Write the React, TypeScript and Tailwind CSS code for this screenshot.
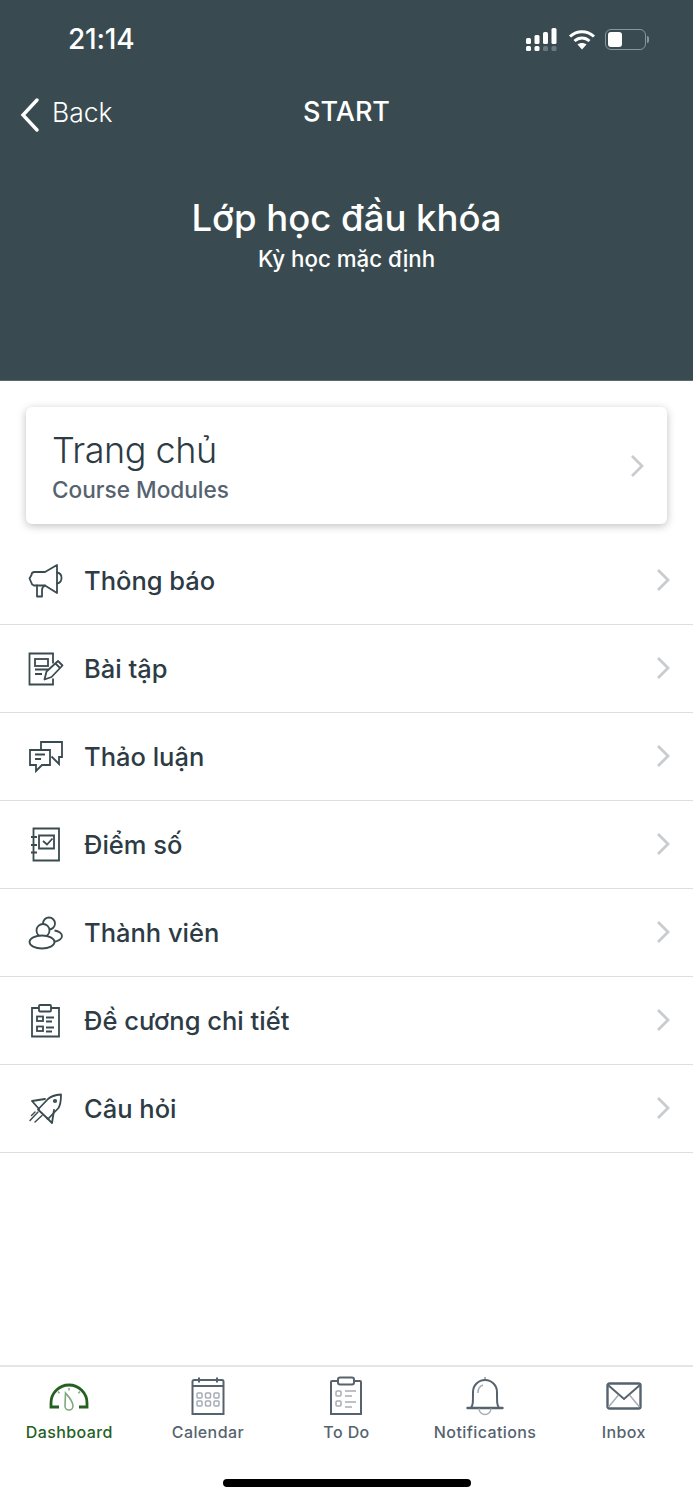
const ink = "#3a4b50";
const slate = "#56636f";

function Megaphone() {
  return (
    <svg width="36" height="36" viewBox="0 0 36 36" fill="none" stroke={ink} strokeWidth="1.8" strokeLinejoin="round" strokeLinecap="round">
      <path d="M6 9h11l12-7v28L17 22.500H6a3 3 0 0 1-2.500-2.500l-2-4.500 2-3.500A3 3 0 0 1 6 9z" />
      <path d="M29 9.500a5.500 5.500 0 0 1 4.500 5.500A5.500 5.500 0 0 1 29 20.500" />
      <path d="M9 22.500V33.500h5v-6.500a5 5 0 0 1 3-4.500" />
    </svg>
  );
}
function Assignment() {
  return (
    <svg width="36" height="36" viewBox="0 0 36 36" fill="none" stroke={ink} strokeWidth="1.8">
      <path d="M25 12.500V2.500H1.500v31H25v-6" />
      <rect x="7" y="8" width="13" height="7" />
      <path d="M7 18.500h13M7 23h7" />
      <path d="M16.500 28.500l2-8L30 10l4.500 4.500L23.500 26z" strokeLinejoin="round" />
      <path d="M27.500 12.500l4.500 4.500" />
    </svg>
  );
}
function Discussion() {
  return (
    <svg width="36" height="36" viewBox="0 0 36 36" fill="none" stroke={ink} strokeWidth="1.8">
      <path d="M2 11h20v15H14l-6 6v-6H2z" />
      <path d="M13 11V3h21v15h-3v7l-7.500-7.500" />
      <path d="M7 15.500h10M7 20h6" />
    </svg>
  );
}
function Grades() {
  return (
    <svg width="36" height="36" viewBox="0 0 36 36" fill="none" stroke={ink} strokeWidth="1.8">
      <path d="M5.500 1.500H31v32H5.500z" />
      <path d="M11 8.500h15v13H11z" />
      <path d="M15 14l4 3.500 5.500-6" />
      <path d="M3 10h6M3 18h6M3 25.500h6" />
    </svg>
  );
}
function People() {
  return (
    <svg width="36" height="36" viewBox="0 0 36 36" fill="none" stroke={ink} strokeWidth="1.8">
      <circle cx="21" cy="8.500" r="6" />
      <path d="M26.500 15.500c4.500.5 7.500 3 7.500 5.500 0 3-3.500 5-8.500 6" />
      <circle cx="15" cy="15.500" r="6.500" fill="#fff" />
      <ellipse cx="14" cy="27" rx="12.500" ry="6.500" fill="#fff" />
    </svg>
  );
}
function Syllabus() {
  return (
    <svg width="36" height="36" viewBox="0 0 36 36" fill="none" stroke={ink} strokeWidth="1.8">
      <path d="M11 5H4v28.500h27V5h-8" />
      <rect x="11" y="2" width="12" height="6.500" rx="1" />
      <rect x="9" y="13.500" width="6" height="4.500" />
      <rect x="9" y="23.500" width="6" height="4.500" />
      <path d="M18 14.500h8M18 18.500h6M18 24.500h8M18 28.500h6" />
    </svg>
  );
}
function Rocket() {
  return (
    <svg width="36" height="36" viewBox="0 0 36 36" fill="none" stroke={ink} strokeWidth="1.8" strokeLinejoin="round" strokeLinecap="round">
      <path d="M33 3.500c-6 .5-10 1.500-13 4.500L10 18.500 20 28l10.500-11c2-3 2.500-8 2.500-13.500z" />
      <path d="M17 8L4 10l7 8" />
      <path d="M26 19l-2 13-5-5" />
      <circle cx="27" cy="10" r="1.200" />
      <path d="M2 29.500L10 21M7 31l7-6.500M3.500 24.500L7 21" strokeWidth="1.400" />
    </svg>
  );
}
function Chevron() {
  return (
    <svg width="14" height="24" viewBox="0 0 14 24" fill="none" stroke="#c8ccd0" strokeWidth="2.800">
      <path d="M2 2l10 10-10 10" />
    </svg>
  );
}
function Dashboard() {
  return (
    <svg width="40" height="26" viewBox="0 0 40 26" fill="none" className="overflow-visible">
      <path d="M10 24H2v-4a18 18 0 0 1 36 0v4h-8" stroke="#24611f" strokeWidth="2.800" />
      <path d="M16.500 10c3.500 4 7.500 8 7.500 13a4 4 0 0 1-8 0z" stroke="#7fa87c" strokeWidth="1.600" />
      <path d="M20 5v2.500M9 8.500l1.500 1.800M31 8.500l-1.500 1.800" stroke="#7fa87c" strokeWidth="1.500" />
    </svg>
  );
}
function CalendarIcon() {
  return (
    <svg width="34" height="40" viewBox="0 0 34 40" fill="none" stroke={slate}>
      <path d="M1.500 5.500A1.500 1.500 0 0 1 3 4h28a1.500 1.500 0 0 1 1.500 1.500V38h-31z" strokeWidth="2" />
      <path d="M2 10h30" strokeWidth="2" />
      <path d="M8 1.500v5M26 1.500v5" strokeWidth="2" />
      <g stroke="#a7adb5" strokeWidth="1.500">
        <rect x="6" y="17" width="5" height="5" rx="1" />
        <rect x="14.500" y="17" width="5" height="5" rx="1" />
        <rect x="23" y="17" width="5" height="5" rx="1" />
        <rect x="6" y="25" width="5" height="5" rx="1" />
        <rect x="14.500" y="25" width="5" height="5" rx="1" />
        <rect x="23" y="25" width="5" height="5" rx="1" />
      </g>
    </svg>
  );
}
function TodoIcon() {
  return (
    <svg width="34" height="40" viewBox="0 0 34 40" fill="none" stroke={slate}>
      <path d="M9 5H3a1 1 0 0 0-1 1v32h30V6a1 1 0 0 0-1-1h-6" strokeWidth="2" />
      <rect x="9" y="1.500" width="16" height="7" rx="2" strokeWidth="2" />
      <g stroke="#a7adb5" strokeWidth="1.500">
        <rect x="7" y="15" width="5" height="5" rx="1" />
        <rect x="7" y="25" width="5" height="5" rx="1" />
        <path d="M16 15h11M16 20h7M16 26h11M16 31h7" />
      </g>
    </svg>
  );
}
function BellIcon() {
  return (
    <svg width="38" height="42" viewBox="0 0 38 42" fill="none" stroke={slate}>
      <path d="M1.500 33h35" strokeWidth="2.400" strokeLinecap="round" />
      <path d="M5 33c2-3 2-5 2-16a12 12 0 0 1 24 0c0 11 0 13 2 16" strokeWidth="2" />
      <path d="M19 2v3" strokeWidth="1" />
      <path d="M13 33.500a6 6 0 0 0 12 0" stroke="#a7adb5" strokeWidth="1.500" />
      <path d="M12 18c0-4 1.500-7 5-8" stroke="#a7adb5" strokeWidth="1.500" />
    </svg>
  );
}
function InboxIcon() {
  return (
    <svg width="36" height="28" viewBox="0 0 36 28" fill="none" stroke={slate}>
      <rect x="1.500" y="1.500" width="33" height="25" rx="2" strokeWidth="2.400" />
      <path d="M2 3l16 14L34 3" strokeWidth="2" />
      <path d="M2.500 25l10-12M33.500 25l-10-12" stroke="#a7adb5" strokeWidth="1.500" />
    </svg>
  );
}
function SignalIcon() {
  return (
    <svg width="34" height="24" viewBox="0 0 34 24" fill="#fff">
      <rect x="1" y="11" width="5" height="6" rx="1.500" />
      <rect x="1" y="19" width="5" height="5" rx="1.500" />
      <rect x="9.500" y="8" width="5" height="9" rx="1.500" />
      <rect x="9.500" y="19" width="5" height="5" rx="1.500" />
      <rect x="18" y="5" width="5" height="12" rx="1.500" />
      <rect x="18" y="19" width="5" height="5" rx="1.500" fill="#6a7a7e" />
      <rect x="26.500" y="1" width="5" height="16" rx="1.500" />
      <rect x="26.500" y="19" width="5" height="5" rx="1.500" fill="#6a7a7e" />
    </svg>
  );
}
function WifiIcon() {
  return (
    <svg width="28" height="22" viewBox="0 0 28 22" fill="none" stroke="#fff" strokeWidth="3">
      <path d="M2 8.500c7-6.500 17-6.500 24 0" />
      <path d="M6.500 13c4.500-4 10.500-4 15 0" />
      <path d="M14 21.500l-4.500-5c2.500-2 6.500-2 9 0z" fill="#fff" stroke="none" />
    </svg>
  );
}
function BatteryIcon() {
  return (
    <div className="flex items-center gap-[1px]">
      <div className="flex h-[21px] w-[41px] items-center rounded-[6px] border-[1.500px] border-[#8a9699] p-[2px]">
        <div className="h-full w-[14px] rounded-[3px] bg-white" />
      </div>
      <div className="h-[7px] w-[2px] rounded-r-full bg-[#8a9699]" />
    </div>
  );
}

const rows = [
  { label: "Thông báo", Icon: Megaphone },
  { label: "Bài tập", Icon: Assignment },
  { label: "Thảo luận", Icon: Discussion },
  { label: "Điểm số", Icon: Grades },
  { label: "Thành viên", Icon: People },
  { label: "Đề cương chi tiết", Icon: Syllabus },
  { label: "Câu hỏi", Icon: Rocket },
];

const tabs = [
  { label: "Dashboard", Icon: Dashboard, active: true },
  { label: "Calendar", Icon: CalendarIcon, active: false },
  { label: "To Do", Icon: TodoIcon, active: false },
  { label: "Notifications", Icon: BellIcon, active: false },
  { label: "Inbox", Icon: InboxIcon, active: false },
];

export default function App() {
  return (
    <div className="flex h-[1500px] w-[693px] flex-col overflow-hidden bg-white font-['Inter','Noto_Sans',sans-serif]">
      <header className="flex h-[381px] shrink-0 flex-col border-b border-[#5a6b70] bg-[#394b50] text-white">
        <div className="flex h-[78px] items-center justify-between pl-[68px] pr-[44px]">
          <span className="text-[28px] font-medium tracking-[-0.2px]">21:14</span>
          <div className="flex items-center gap-[9px]">
            <SignalIcon />
            <WifiIcon />
            <BatteryIcon />
          </div>
        </div>
        <div className="relative flex h-[68px] items-center justify-center">
          <div className="absolute left-[20px] top-[17px] flex items-center gap-[12px]">
            <svg width="20" height="34" viewBox="0 0 20 34" fill="none" stroke="#fff" strokeWidth="3.400" strokeLinecap="round">
              <path d="M17 2L3 17l14 15" />
            </svg>
            <span className="-translate-y-[2px] text-[26.500px] font-light">Back</span>
          </div>
          <span className="text-[27px] font-medium">START</span>
        </div>
        <div className="flex flex-col items-center pt-[44px]">
          <span className="text-[36.500px] font-medium leading-[56px]">Lớp học đầu khóa</span>
          <span className="text-[22.300px] font-medium leading-[26px]">Kỳ học mặc định</span>
        </div>
      </header>

      <main className="flex flex-1 flex-col">
        <div className="px-[26px] pt-[26px] pb-[13px]">
          <div className="flex h-[117px] items-center justify-between rounded-[6px] bg-white pl-[26px] pr-[23px] shadow-[0_2px_8px_rgba(0,0,0,0.25)]">
            <div className="flex flex-col gap-[4px]">
              <span className="text-[36px] font-light leading-[44px] tracking-[-0.5px] text-[#2d3b45]">Trang chủ</span>
              <span className="text-[22.600px] font-medium leading-[28px] text-[#56636f]">Course Modules</span>
            </div>
            <Chevron />
          </div>
        </div>
        {rows.map(({ label, Icon }) => (
          <div key={label} className="flex h-[88px] items-center border-b border-[#dcdfe1] pl-[28px] pr-[23px]">
            <div className="flex w-[57px] shrink-0 items-center">
              <Icon />
            </div>
            <span className="flex-1 -translate-x-[1px] translate-y-[1px] text-[25.500px] font-medium text-[#2d3b45]">{label}</span>
            <div className="mb-[2px]">
              <Chevron />
            </div>
          </div>
        ))}
      </main>

      <nav className="relative h-[135px] shrink-0 border-t-2 border-[#e3e5e7] bg-white">
        <div className="grid grid-cols-5">
          {tabs.map(({ label, Icon, active }) => (
            <div key={label} className="flex flex-col items-center">
              <div className="flex h-[58px] items-center justify-center">
                <Icon />
              </div>
              <span className={`text-[16px] font-medium leading-[14px] tracking-[0.4px] ${active ? "text-[#24611f]" : "text-[#56636f]"}`}>
                {label}
              </span>
            </div>
          ))}
        </div>
        <div className="absolute bottom-[13px] left-[223px] h-[8px] w-[248px] rounded-full bg-black" />
      </nav>
    </div>
  );
}
